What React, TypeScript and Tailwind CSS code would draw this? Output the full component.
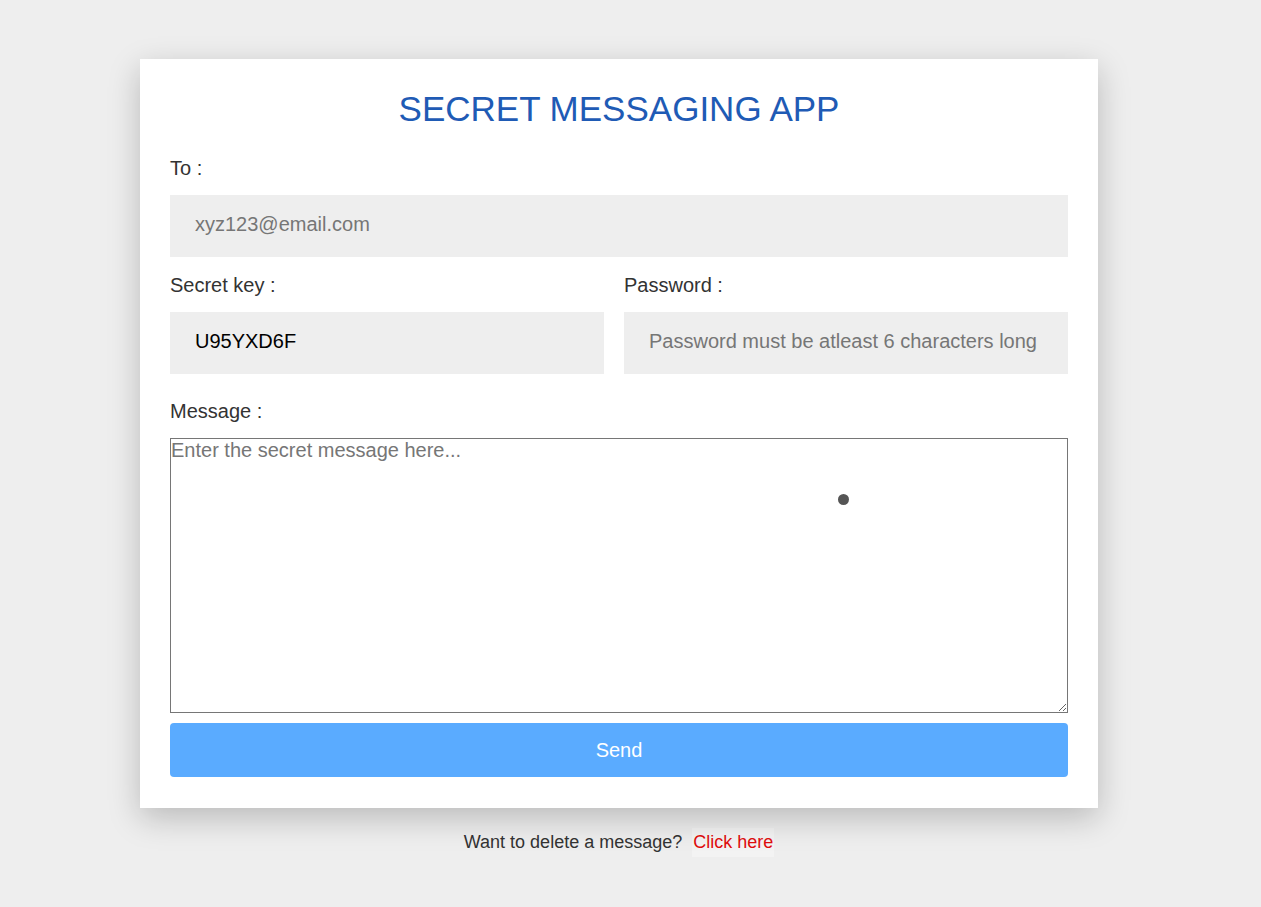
import React from 'react';

const labelCls = "block text-[20px] leading-[23px] text-[#333333]";
const fieldCls = "w-full h-[62px] bg-[#eeeeee] px-[25px] pb-[3px] text-[20px] text-black placeholder:text-[#767676] outline-none";

export default function App() {
  return (
    <div className="min-h-screen bg-[#eeeeee] pt-[59px] pb-[50px] font-['Liberation_Sans',Arial,sans-serif]">
      <div className="ml-[140px] w-[958px]">
        <div className="relative bg-white px-[30px] pt-[30px] pb-[31px] shadow-[0_10px_30px_rgba(0,0,0,0.22)]">
          <h1 className="text-center text-[35px] leading-[40px] text-[#1f5bb5]">SECRET MESSAGING APP</h1>

          <label className={`${labelCls} mt-[28px]`}>To :</label>
          <input className={`${fieldCls} mt-[15px]`} placeholder="xyz123@email.com" />

          <div className="mt-[17px] flex gap-[20px]">
            <div className="w-[434px]">
              <label className={labelCls}>Secret key :</label>
              <input className={`${fieldCls} mt-[15px]`} defaultValue="U95YXD6F" />
            </div>
            <div className="flex-1">
              <label className={labelCls}>Password :</label>
              <input type="password" className={`${fieldCls} mt-[15px]`} placeholder="Password must be atleast 6 characters long" />
            </div>
          </div>

          <label className={`${labelCls} mt-[26px]`}>Message :</label>
          <textarea
            className="mt-[15px] block w-full h-[275px] border border-[#767676] bg-white p-0 text-[20px] leading-[23px] placeholder:text-[#767676] outline-none"
            placeholder="Enter the secret message here..."
          />

          <button className="mt-[10px] block w-full h-[54px] rounded-[4px] bg-[#5aabff] text-[20px] text-white">Send</button>

          <span className="absolute left-[698px] top-[435px] h-[11px] w-[11px] rounded-full bg-[#555555]" />
        </div>

        <div className="mt-[20px] flex items-center justify-center text-[18px] text-[#333333]">
          <span>Want to delete a message?</span>
          <a className="ml-[10px] bg-[#f3f3f3] px-[1px] leading-[29px] text-[#e00d0d] cursor-pointer">Click here</a>
        </div>
      </div>
    </div>
  );
}
